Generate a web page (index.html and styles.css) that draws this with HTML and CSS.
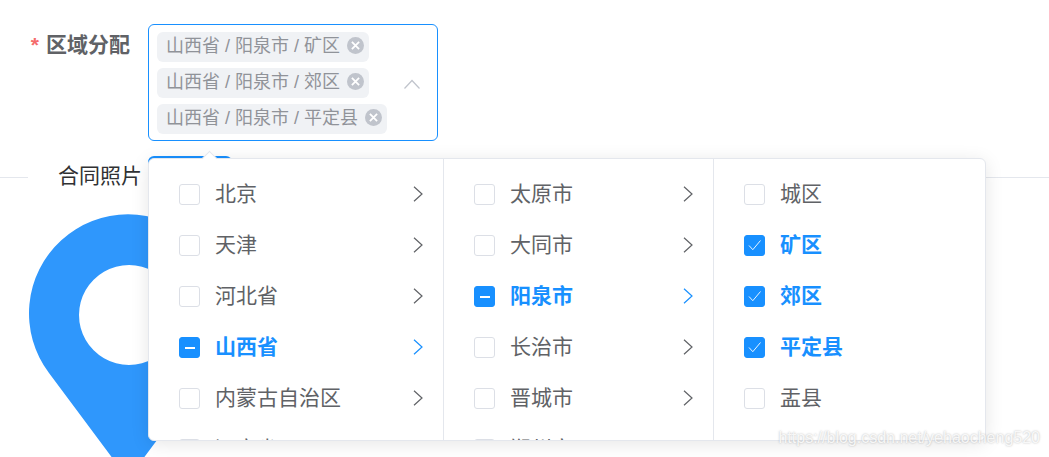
FILE: index.html
```html
<!DOCTYPE html>
<html lang="zh-CN">
<head>
    <meta charset="UTF-8">
    <meta name="viewport" content="width=device-width, initial-scale=1.0">
    <title>区域分配</title>
    <link rel="stylesheet" href="styles.css">
</head>
<body>
    <div class="page">
        <div class="form-row">
            <label class="form-label"><span class="required">*</span>区域分配</label>
            <div class="select-box">
                <div class="tags">
                    <span class="tag">山西省 / 阳泉市 / 矿区<svg class="tag-close" viewBox="0 0 17 17"><circle cx="8.5" cy="8.5" r="8.5"/><path d="M4.9 4.9l7.2 7.2M12.1 4.9l-7.2 7.2"/></svg></span>
                    <span class="tag">山西省 / 阳泉市 / 郊区<svg class="tag-close" viewBox="0 0 17 17"><circle cx="8.5" cy="8.5" r="8.5"/><path d="M4.9 4.9l7.2 7.2M12.1 4.9l-7.2 7.2"/></svg></span>
                    <span class="tag">山西省 / 阳泉市 / 平定县<svg class="tag-close" viewBox="0 0 17 17"><circle cx="8.5" cy="8.5" r="8.5"/><path d="M4.9 4.9l7.2 7.2M12.1 4.9l-7.2 7.2"/></svg></span>
                </div>
                <svg class="select-arrow" viewBox="0 0 18 12"><path d="M1.5 10.5L9 2.5l7.5 8"/></svg>
            </div>
        </div>

        <div class="divider">
            <span class="divider-line short"></span>
            <span class="divider-text">合同照片</span>
            <span class="divider-line"></span>
        </div>

        <svg class="pin" viewBox="0 0 198 268">
            <path fill-rule="evenodd" d="M99 266L20 160A99 99 0 1 1 178 160ZM100 52a50 50 0 1 0 .01 0Z"/>
        </svg>

        <div class="upload-btn"></div>

        <div class="dropdown">
            <span class="dropdown-arrow"></span>
            <ul class="menu menu-province">
                <li class="item"><span class="check"></span><span class="name">北京</span><svg class="chevron" viewBox="0 0 10 16"><path d="M1 .8l8 7.2-8 7.2"/></svg></li>
                <li class="item"><span class="check"></span><span class="name">天津</span><svg class="chevron" viewBox="0 0 10 16"><path d="M1 .8l8 7.2-8 7.2"/></svg></li>
                <li class="item"><span class="check"></span><span class="name">河北省</span><svg class="chevron" viewBox="0 0 10 16"><path d="M1 .8l8 7.2-8 7.2"/></svg></li>
                <li class="item active"><span class="check partial"></span><span class="name">山西省</span><svg class="chevron" viewBox="0 0 10 16"><path d="M1 .8l8 7.2-8 7.2"/></svg></li>
                <li class="item"><span class="check"></span><span class="name">内蒙古自治区</span><svg class="chevron" viewBox="0 0 10 16"><path d="M1 .8l8 7.2-8 7.2"/></svg></li>
                <li class="item"><span class="check"></span><span class="name">辽宁省</span><svg class="chevron" viewBox="0 0 10 16"><path d="M1 .8l8 7.2-8 7.2"/></svg></li>
            </ul>
            <ul class="menu menu-city">
                <li class="item"><span class="check"></span><span class="name">太原市</span><svg class="chevron" viewBox="0 0 10 16"><path d="M1 .8l8 7.2-8 7.2"/></svg></li>
                <li class="item"><span class="check"></span><span class="name">大同市</span><svg class="chevron" viewBox="0 0 10 16"><path d="M1 .8l8 7.2-8 7.2"/></svg></li>
                <li class="item active"><span class="check partial"></span><span class="name">阳泉市</span><svg class="chevron" viewBox="0 0 10 16"><path d="M1 .8l8 7.2-8 7.2"/></svg></li>
                <li class="item"><span class="check"></span><span class="name">长治市</span><svg class="chevron" viewBox="0 0 10 16"><path d="M1 .8l8 7.2-8 7.2"/></svg></li>
                <li class="item"><span class="check"></span><span class="name">晋城市</span><svg class="chevron" viewBox="0 0 10 16"><path d="M1 .8l8 7.2-8 7.2"/></svg></li>
                <li class="item"><span class="check"></span><span class="name">朔州市</span><svg class="chevron" viewBox="0 0 10 16"><path d="M1 .8l8 7.2-8 7.2"/></svg></li>
            </ul>
            <ul class="menu menu-district">
                <li class="item"><span class="check"></span><span class="name">城区</span></li>
                <li class="item active"><span class="check"><svg viewBox="0 0 21 21"><path d="M5 10.5l3.8 4.2L16.5 5.5"/></svg></span><span class="name">矿区</span></li>
                <li class="item active"><span class="check"><svg viewBox="0 0 21 21"><path d="M5 10.5l3.8 4.2L16.5 5.5"/></svg></span><span class="name">郊区</span></li>
                <li class="item active"><span class="check"><svg viewBox="0 0 21 21"><path d="M5 10.5l3.8 4.2L16.5 5.5"/></svg></span><span class="name">平定县</span></li>
                <li class="item"><span class="check"></span><span class="name">盂县</span></li>
            </ul>
        </div>

        <div class="watermark">https://blog.csdn.net/yehaocheng520</div>
    </div>
</body>
</html>
```

FILE: styles.css
```css
:root {
    --primary: #1890ff;
    --text: #606266;
    --muted: #909399;
    --placeholder: #c0c4cc;
    --border: #e4e7ed;
}

* {
    margin: 0;
    padding: 0;
    box-sizing: border-box;
}

body {
    font-family: "Liberation Sans", "Noto Sans CJK SC", sans-serif;
    background: white;
    color: var(--text);
}

.page {
    position: relative;
    height: 457px;
    overflow: hidden;
}

/* form row */
.form-row {
    display: flex;
    padding-top: 24px;
}

.form-label {
    width: 148px;
    padding: 6px 18px 0 0;
    text-align: right;
    font-size: 21px;
    line-height: 30px;
    font-weight: 700;
}

.required {
    color: #f56c6c;
    margin-right: 7px;
}

.select-box {
    display: flex;
    align-items: center;
    width: 290px;
    height: 117px;
    padding: 6px 16px 6px 8px;
    border: 1px solid var(--primary);
    border-radius: 6px;
}

.tags {
    flex: 1;
    display: flex;
    flex-direction: column;
    align-items: flex-start;
    gap: 6px;
}

.tag {
    display: flex;
    align-items: center;
    gap: 7px;
    height: 30px;
    padding: 0 5px 6px 9px;
    background: #f0f2f5;
    border-radius: 6px;
    color: var(--muted);
    font-size: 18px;
    white-space: nowrap;
}

.tag-close {
    width: 17px;
    height: 17px;
    margin-top: 4px;
}

.tag-close circle {
    fill: var(--placeholder);
}

.tag-close path {
    stroke: white;
    stroke-width: 1.8;
    fill: none;
}

.select-arrow {
    width: 18px;
    height: 12px;
    margin-top: 3px;
}

.select-arrow path {
    fill: none;
    stroke: var(--placeholder);
    stroke-width: 1.2;
}

/* section behind the dropdown */
.divider {
    display: flex;
    align-items: center;
    margin-top: 21px;
    height: 30px;
}

.divider-line {
    flex: 1;
    height: 1px;
    background: var(--border);
}

.divider-line.short {
    flex: 0 0 28px;
}

.divider-text {
    padding: 0 30px 6px;
    font-size: 21px;
    color: #303133;
}

.pin {
    display: block;
    width: 198px;
    height: 268px;
    margin: 21px 0 0 29px;
}

.pin path {
    fill: #2f97fc;
}

.upload-btn {
    position: absolute;
    left: 148px;
    top: 156px;
    width: 84px;
    height: 40px;
    background: var(--primary);
    border-radius: 6px;
}

/* cascader dropdown */
.dropdown {
    position: absolute;
    left: 148px;
    top: 158px;
    display: flex;
    width: 838px;
    height: 283px;
    background: white;
    border: 1px solid var(--border);
    border-radius: 6px;
    box-shadow: 0 3px 18px rgba(0, 0, 0, 0.1);
}

.dropdown-arrow {
    position: absolute;
    left: 55px;
    top: -6px;
    width: 11px;
    height: 11px;
    background: white;
    border-top: 1px solid var(--border);
    border-left: 1px solid var(--border);
    transform: rotate(45deg);
}

.menu {
    list-style: none;
    height: 100%;
    padding-top: 10px;
    overflow: hidden;
    border-right: 1px solid var(--border);
}

.menu-province {
    width: 295px;
}

.menu-city {
    width: 270px;
}

.menu-district {
    flex: 1;
    border-right: none;
}

.item {
    display: flex;
    align-items: center;
    gap: 15px;
    height: 51px;
    padding: 0 20px 0 30px;
    font-size: 21px;
}

.item .name {
    flex: 1;
    padding-bottom: 5px;
}

.item.active {
    color: var(--primary);
    font-weight: 700;
}

.check {
    display: flex;
    align-items: center;
    justify-content: center;
    flex: none;
    width: 21px;
    height: 21px;
    border: 1px solid #dcdfe6;
    border-radius: 3px;
    background: white;
}

.check svg {
    flex: none;
    width: 21px;
    height: 21px;
}

.check path {
    fill: none;
    stroke: white;
    stroke-width: 0.9;
}

.active .check {
    background: var(--primary);
    border-color: var(--primary);
}

.check.partial::before {
    content: "";
    width: 10px;
    height: 2px;
    background: white;
}

.chevron {
    flex: none;
    width: 10px;
    height: 16px;
    margin-bottom: 2px;
}

.chevron path {
    fill: none;
    stroke: var(--text);
    stroke-width: 1.2;
}

.active .chevron path {
    stroke: var(--primary);
}

.watermark {
    position: absolute;
    right: 9px;
    top: 429px;
    color: rgba(255, 255, 255, 0.85);
    font-size: 16px;
    text-shadow: 0 0 2px rgba(90, 90, 90, 0.45);
}
```
